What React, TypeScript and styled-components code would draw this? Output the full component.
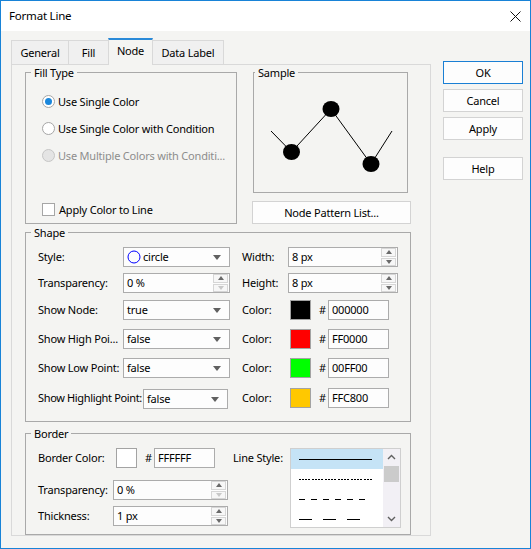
import React from "react";
import styled, { createGlobalStyle } from "styled-components";

const BG = "#f4f4f2";

const Global = createGlobalStyle`
  html, body { margin: 0; padding: 0; background: #fff; }
  body { font-family: "Noto Sans", "Segoe UI", sans-serif; font-size: 11px; letter-spacing: -0.2px; color: #000; }
  * { box-sizing: border-box; }
`;

const Window = styled.div`
  width: 531px;
  height: 549px;
  border: 1px solid #1883d7;
  background: ${BG};
  display: flex;
  flex-direction: column;
  overflow: hidden;
`;

const TitleBar = styled.div`
  height: 30px;
  flex: none;
  background: #fff;
  display: flex;
  align-items: center;
  justify-content: space-between;
  padding: 0 9px 0 8px;
  line-height: 14px;
  font-size: 11.5px;
`;

const Body = styled.div`
  flex: 1;
  display: flex;
  align-items: flex-start;
  gap: 12px;
  padding: 7px 0 0 10px;
`;

const TabArea = styled.div`
  width: 420px;
  display: flex;
  flex-direction: column;
`;

const TabStrip = styled.div`
  height: 26px;
  display: flex;
  align-items: flex-end;
  position: relative;
  z-index: 1;
`;

const Tab = styled.div<{ $w: number; $active?: boolean }>`
  width: ${(p) => p.$w}px;
  height: ${(p) => (p.$active ? 27 : 24)}px;
  margin-bottom: ${(p) => (p.$active ? -1 : 0)}px;
  margin-left: -1px;
  &:first-child { margin-left: 0; }
  border: 1px solid #d9d9d9;
  border-bottom: none;
  border-top: ${(p) => (p.$active ? "2px solid #2a8ad8" : "1px solid #d9d9d9")};
  background: ${(p) => (p.$active ? BG : "#f0f0f0")};
  display: flex;
  align-items: center;
  justify-content: center;
  padding-bottom: ${(p) => (p.$active ? 3 : 0)}px;
  line-height: 14px;
  white-space: nowrap;
`;

const Panel = styled.div`
  height: 472px;
  border: 1px solid #d9d9d9;
  padding: 7px 0 0 13px;
  display: flex;
  flex-direction: column;
`;

const TopRow = styled.div`
  display: flex;
  height: 152px;
`;

const Group = styled.div<{ $w: number; $h: number; $mt?: number; $ml?: number }>`
  position: relative;
  width: ${(p) => p.$w}px;
  height: ${(p) => p.$h}px;
  margin-top: ${(p) => p.$mt ?? 0}px;
  margin-left: ${(p) => p.$ml ?? 0}px;
  border: 1px solid #a9a9a9;
  flex: none;
`;

const GroupTitle = styled.span<{ $left: number }>`
  position: absolute;
  top: -8px;
  left: ${(p) => p.$left}px;
  padding: 0 3px;
  background: ${BG};
  line-height: 15px;
  white-space: nowrap;
`;

const FillContent = styled.div`
  height: 100%;
  display: flex;
  flex-direction: column;
  gap: 7px;
  padding: 18px 0 4px 16px;
`;

const OptionRow = styled.div<{ $disabled?: boolean; $bottom?: boolean }>`
  height: 20px;
  display: flex;
  align-items: center;
  gap: 3px;
  white-space: nowrap;
  color: ${(p) => (p.$disabled ? "#8d8d8d" : "#000")};
  margin-top: ${(p) => (p.$bottom ? "auto" : "0")};
`;

const RadioDot = styled.span<{ $checked?: boolean; $disabled?: boolean }>`
  width: 13px;
  height: 13px;
  flex: none;
  border-radius: 50%;
  border: 1px solid ${(p) => (p.$disabled ? "#c6c6c6" : "#a6a6a6")};
  background: ${(p) => (p.$disabled ? "#e4e4e4" : "#fff")};
  display: flex;
  align-items: center;
  justify-content: center;
  &::after {
    content: "";
    display: ${(p) => (p.$checked ? "block" : "none")};
    width: 7px;
    height: 7px;
    border-radius: 50%;
    background: #1a87dc;
  }
`;

const CheckBox = styled.span`
  width: 13px;
  height: 13px;
  flex: none;
  border: 1px solid #a6a6a6;
  background: #fff;
  margin-right: 1px;
`;

const RightCol = styled.div`
  width: 159px;
  margin-left: 15px;
  display: flex;
  flex-direction: column;
`;

const SampleBox = styled.svg`
  display: block;
  width: 153px;
  height: 119px;
`;

const PushButton = styled.button<{ $default?: boolean; $mt?: number; $w?: number }>`
  width: ${(p) => p.$w ?? 80}px;
  height: 23px;
  flex: none;
  margin-top: ${(p) => p.$mt ?? 0}px;
  border: 1px solid ${(p) => (p.$default ? "#1a7fd4" : "#d3d3d3")};
  background: #fdfdfd;
  font-family: inherit;
  font-size: 11px;
  letter-spacing: -0.2px;
  color: #000;
  padding: 0;
  line-height: 14px;
`;

const ButtonCol = styled.div`
  width: 80px;
  margin-top: 23px;
  display: flex;
  flex-direction: column;
`;

const GroupContent = styled.div<{ $pt: number }>`
  padding: ${(p) => p.$pt}px 0 0 12px;
  display: flex;
  flex-direction: column;
`;

const ShapeRow = styled.div<{ $mt?: number }>`
  display: flex;
  height: 20px;
  margin-top: ${(p) => p.$mt ?? 0}px;
`;

const LeftCell = styled.div`
  width: 192px;
  display: flex;
  align-items: center;
  flex: none;
`;

const RightCell = styled.div`
  margin-left: 12px;
  display: flex;
  align-items: center;
`;

const Label = styled.span<{ $w: number; $tight?: boolean }>`
  width: ${(p) => p.$w}px;
  flex: none;
  white-space: nowrap;
  line-height: 14px;
  letter-spacing: ${(p) => (p.$tight ? "-0.35px" : "-0.2px")};
`;

const Field = styled.div<{ $w: number; $mt?: number }>`
  width: ${(p) => p.$w}px;
  height: 20px;
  flex: none;
  margin-top: ${(p) => p.$mt ?? 0}px;
  border: 1px solid #acacac;
  background: #fdfdfd;
  display: flex;
  align-items: center;
  padding-left: 3px;
  line-height: 14px;
  white-space: nowrap;
`;

const FieldText = styled.span`
  flex: 1;
  display: flex;
  align-items: center;
  gap: 2px;
`;

const ArrowBox = styled.span`
  width: 20px;
  height: 100%;
  display: flex;
  align-items: center;
  justify-content: center;
  margin-right: 2px;
  &::after {
    content: "";
    border-left: 4.5px solid transparent;
    border-right: 4.5px solid transparent;
    border-top: 5px solid #606060;
  }
`;

const SpinCol = styled.span`
  width: 15px;
  height: 18px;
  display: flex;
  flex-direction: column;
  gap: 1px;
  margin-right: 1px;
`;

const SpinBtn = styled.span<{ $up?: boolean; $dim?: boolean }>`
  flex: 1;
  border: 1px solid #d6d6d6;
  background: #f7f7f7;
  display: flex;
  align-items: center;
  justify-content: center;
  &::after {
    content: "";
    border-left: 3.5px solid transparent;
    border-right: 3.5px solid transparent;
    ${(p) =>
      p.$up
        ? `border-bottom: 4px solid ${p.$dim ? "#c8c8c8" : "#6a6a6a"};`
        : `border-top: 4px solid ${p.$dim ? "#c8c8c8" : "#6a6a6a"};`}
  }
`;

const Swatch = styled.span<{ $c: string; $ml?: number }>`
  width: 21px;
  height: 20px;
  flex: none;
  margin-left: ${(p) => p.$ml ?? 0}px;
  border: 1px solid #a3a3a3;
  background: ${(p) => p.$c};
`;

const Hash = styled.span<{ $w: number }>`
  width: ${(p) => p.$w}px;
  flex: none;
  text-align: right;
  padding-right: 2px;
  line-height: 14px;
`;

const BorderBody = styled.div`
  display: flex;
  padding: 14px 0 0 12px;
`;

const BorderLeft = styled.div`
  width: 195px;
  display: flex;
  flex-direction: column;
`;

const BorderRight = styled.div`
  display: flex;
  align-items: flex-start;
`;

const LineLabel = styled.span`
  width: 57px;
  height: 20px;
  display: flex;
  align-items: center;
  line-height: 14px;
`;

const ListBox = styled.div`
  width: 111px;
  height: 80px;
  border: 1px solid #cfcfcf;
  background: #fff;
  display: flex;
  overflow: hidden;
`;

const ListItems = styled.div`
  flex: 1;
  display: flex;
  flex-direction: column;
`;

const ListItem = styled.div<{ $selected?: boolean }>`
  height: 20px;
  flex: none;
  background: ${(p) => (p.$selected ? "#c5e3f6" : "#fff")};
  display: flex;
  align-items: center;
  padding-left: 8px;
`;

const ScrollBar = styled.div`
  width: 17px;
  background: #f2f0f5;
  display: flex;
  flex-direction: column;
  align-items: center;
`;

const ScrollArrow = styled.svg`
  display: block;
  width: 17px;
  height: 17px;
  flex: none;
`;

const Thumb = styled.div`
  width: 15px;
  height: 16px;
  background: #cbcbcb;
`;

const ScrollTrack = styled.div`
  flex: 1;
`;

const LinePic = styled.svg`
  display: block;
  width: 76px;
  height: 3px;
`;

type Row = { label: string; value: string; kind: "combo" | "spin"; color?: string; rlabel: string; rvalue?: string; mt: number };

const rows: Row[] = [
  { label: "Style:", value: "circle", kind: "combo", rlabel: "Width:", rvalue: "8 px", mt: 0 },
  { label: "Transparency:", value: "0 %", kind: "spin", rlabel: "Height:", rvalue: "8 px", mt: 6 },
  { label: "Show Node:", value: "true", kind: "combo", rlabel: "Color:", color: "#000000", mt: 7 },
  { label: "Show High Poi...", value: "false", kind: "combo", rlabel: "Color:", color: "#FF0000", mt: 9 },
  { label: "Show Low Point:", value: "false", kind: "combo", rlabel: "Color:", color: "#00FF00", mt: 9 },
  { label: "Show Highlight Point:", value: "false", kind: "combo", rlabel: "Color:", color: "#FFC800", mt: 10 },
];

function Spinner({ w, value, dimDown }: { w: number; value: string; dimDown?: boolean }) {
  return (
    <Field $w={w}>
      <FieldText>{value}</FieldText>
      <SpinCol>
        <SpinBtn $up />
        <SpinBtn $dim={dimDown} />
      </SpinCol>
    </Field>
  );
}

export default function App() {
  return (
    <>
      <Global />
      <Window>
        <TitleBar>
          <span>Format Line</span>
          <svg width="11" height="11" viewBox="0 0 11 11">
            <path d="M0.5 0.5 L10.5 10.5 M10.5 0.5 L0.5 10.5" stroke="#111" strokeWidth="1" />
          </svg>
        </TitleBar>
        <Body>
          <TabArea>
            <TabStrip>
              <Tab $w={58}>General</Tab>
              <Tab $w={41}>Fill</Tab>
              <Tab $w={45} $active>Node</Tab>
              <Tab $w={72}>Data Label</Tab>
            </TabStrip>
            <Panel>
              <TopRow>
                <Group $w={212} $h={152}>
                  <GroupTitle $left={5}>Fill Type</GroupTitle>
                  <FillContent>
                    <OptionRow>
                      <RadioDot $checked />
                      Use Single Color
                    </OptionRow>
                    <OptionRow>
                      <RadioDot />
                      Use Single Color with Condition
                    </OptionRow>
                    <OptionRow $disabled>
                      <RadioDot $disabled />
                      Use Multiple Colors with Conditi...
                    </OptionRow>
                    <OptionRow $bottom>
                      <CheckBox />
                      Apply Color to Line
                    </OptionRow>
                  </FillContent>
                </Group>
                <RightCol>
                  <Group $w={155} $h={121} $ml={1}>
                    <GroupTitle $left={1}>Sample</GroupTitle>
                    <SampleBox viewBox="0 0 153 119">
                      <polyline
                        points="17,58 37.5,79 77,36 117,91 138,58"
                        fill="none"
                        stroke="#000"
                        strokeWidth="1"
                      />
                      <ellipse cx="37.5" cy="79" rx="8.5" ry="8" fill="#000" />
                      <ellipse cx="77" cy="36" rx="8.5" ry="8" fill="#000" />
                      <ellipse cx="117" cy="91" rx="8.5" ry="8" fill="#000" />
                    </SampleBox>
                  </Group>
                  <PushButton $w={159} $mt={8}>Node Pattern List...</PushButton>
                </RightCol>
              </TopRow>

              <Group $w={386} $h={190} $mt={8}>
                <GroupTitle $left={5}>Shape</GroupTitle>
                <GroupContent $pt={14}>
                  {rows.map((r, i) => {
                    const last = i === rows.length - 1;
                    return (
                      <ShapeRow key={i} $mt={r.mt}>
                        <LeftCell>
                          <Label $w={last ? 105 : 85} $tight={last}>{r.label}</Label>
                          {r.kind === "spin" ? (
                            <Spinner w={107} value={r.value} dimDown />
                          ) : (
                            <Field $w={last ? 85 : 107} $mt={last ? 2 : 0}>
                              <FieldText>
                                {i === 0 && (
                                  <svg width="14" height="14" viewBox="0 0 14 14">
                                    <circle cx="7" cy="7" r="6" fill="none" stroke="#0000ff" strokeWidth="1" />
                                  </svg>
                                )}
                                {r.value}
                              </FieldText>
                              <ArrowBox />
                            </Field>
                          )}
                        </LeftCell>
                        <RightCell>
                          <Label $w={46}>{r.rlabel}</Label>
                          {r.color ? (
                            <>
                              <Swatch $c={r.color} $ml={2} />
                              <Hash $w={17}>#</Hash>
                              <Field $w={61}>{r.color.slice(1)}</Field>
                            </>
                          ) : (
                            <Spinner w={110} value={r.rvalue ?? ""} />
                          )}
                        </RightCell>
                      </ShapeRow>
                    );
                  })}
                </GroupContent>
              </Group>

              <Group $w={386} $h={102} $mt={11}>
                <GroupTitle $left={5}>Border</GroupTitle>
                <BorderBody>
                  <BorderLeft>
                    <ShapeRow>
                      <LeftCell>
                        <Label $w={78}>Border Color:</Label>
                        <Swatch $c="#ffffff" />
                        <Hash $w={17}>#</Hash>
                        <Field $w={61}>FFFFFF</Field>
                      </LeftCell>
                    </ShapeRow>
                    <ShapeRow $mt={12}>
                      <LeftCell>
                        <Label $w={75}>Transparency:</Label>
                        <Spinner w={115} value="0 %" dimDown />
                      </LeftCell>
                    </ShapeRow>
                    <ShapeRow $mt={6}>
                      <LeftCell>
                        <Label $w={75}>Thickness:</Label>
                        <Spinner w={115} value="1 px" />
                      </LeftCell>
                    </ShapeRow>
                  </BorderLeft>
                  <BorderRight>
                    <LineLabel>Line Style:</LineLabel>
                    <ListBox>
                      <ListItems>
                        <ListItem $selected>
                          <LinePic viewBox="0 0 76 3">
                            <line x1="0" y1="1.5" x2="73" y2="1.5" stroke="#000" strokeWidth="1" />
                          </LinePic>
                        </ListItem>
                        <ListItem>
                          <LinePic viewBox="0 0 76 3">
                            <line x1="0" y1="1.5" x2="73" y2="1.5" stroke="#000" strokeWidth="1" strokeDasharray="2 1 2 1 2 1 2 2" />
                          </LinePic>
                        </ListItem>
                        <ListItem>
                          <LinePic viewBox="0 0 76 3">
                            <line x1="0" y1="1.5" x2="67" y2="1.5" stroke="#000" strokeWidth="1" strokeDasharray="6 6" />
                          </LinePic>
                        </ListItem>
                        <ListItem>
                          <LinePic viewBox="0 0 76 3">
                            <line x1="0" y1="1.5" x2="62" y2="1.5" stroke="#000" strokeWidth="1" strokeDasharray="13 11" />
                          </LinePic>
                        </ListItem>
                      </ListItems>
                      <ScrollBar>
                        <ScrollArrow viewBox="0 0 17 17">
                          <path d="M5 10 L8.5 6.5 L12 10" fill="none" stroke="#606060" strokeWidth="1.4" />
                        </ScrollArrow>
                        <Thumb />
                        <ScrollTrack />
                        <ScrollArrow viewBox="0 0 17 17">
                          <path d="M5 7 L8.5 10.5 L12 7" fill="none" stroke="#606060" strokeWidth="1.4" />
                        </ScrollArrow>
                      </ScrollBar>
                    </ListBox>
                  </BorderRight>
                </BorderBody>
              </Group>
            </Panel>
          </TabArea>
          <ButtonCol>
            <PushButton $default>OK</PushButton>
            <PushButton $mt={5}>Cancel</PushButton>
            <PushButton $mt={5}>Apply</PushButton>
            <PushButton $mt={17}>Help</PushButton>
          </ButtonCol>
        </Body>
      </Window>
    </>
  );
}
